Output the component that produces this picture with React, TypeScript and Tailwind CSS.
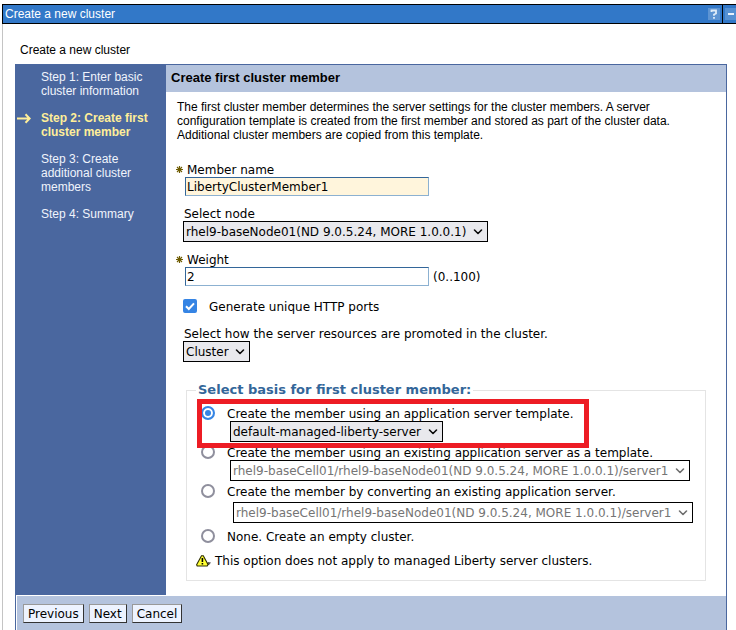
import type { ReactNode } from "react";

const sans = "font-['Liberation_Sans',Arial,sans-serif]";

function Chevron({ muted }: { muted?: boolean }) {
  return (
    <svg
      className="pointer-events-none absolute top-[7px] right-[5px] h-2 w-2.5"
      viewBox="0 0 10 8"
      fill="none"
      stroke={muted ? "#6e6e6e" : "#0a0a0a"}
      strokeWidth="1.6"
      strokeLinecap="round"
      strokeLinejoin="round"
      aria-hidden="true"
    >
      <path d="M1.5 2 5 5.5 8.5 2" />
    </svg>
  );
}

function Select({ id, value, label, disabled }: { id: string; value: string; label?: string; disabled?: boolean }) {
  return (
    <div className="relative w-fit">
      <select
        id={id}
        aria-label={label}
        disabled={disabled}
        defaultValue={value}
        className="block h-[21px] appearance-none border border-black bg-[#e9e9ed] pr-5 pl-0.5 leading-[18px] text-black disabled:bg-white disabled:text-[#757575] disabled:opacity-100"
      >
        <option>{value}</option>
      </select>
      <Chevron muted={disabled} />
    </div>
  );
}

function Required() {
  return (
    <svg className="h-[7px] w-[7px]" viewBox="0 0 7 7" stroke="#6e5c00" aria-hidden="true">
      <path d="M3.5 0v7M0 3.5h7" strokeWidth="1.2" />
      <path d="M1 1l5 5M6 1L1 6" strokeWidth="1.1" />
    </svg>
  );
}

function Label({ htmlFor, required, children }: { htmlFor: string; required?: boolean; children: ReactNode }) {
  return (
    <label htmlFor={htmlFor} className={required ? "-ml-[7px] flex h-4 items-center gap-1 leading-[18px]" : "block h-4 pl-px leading-[18px]"}>
      {required && <Required />}
      <span className="h-4">{children}</span>
    </label>
  );
}

function TextBox({ id, value, filled }: { id: string; value: string; filled?: boolean }) {
  return (
    <input
      id={id}
      type="text"
      defaultValue={value}
      className={`ml-0.5 block h-[19px] w-[244px] border border-t-[#336699] border-r-[#8cb1d1] border-b-[#8cb1d1] border-l-[#336699] px-px outline-none ${filled ? "bg-[#fff5dc]" : "bg-white"}`}
    />
  );
}

function Radio({ id, checked, children }: { id: string; checked?: boolean; children: ReactNode }) {
  return (
    <div className="flex h-4 items-center gap-3">
      <input
        id={id}
        type="radio"
        name="basis"
        defaultChecked={checked}
        className="h-3.5 w-3.5 shrink-0 appearance-none rounded-full border-2 border-[#8f8f9d] bg-white checked:border-[#3584e4] checked:bg-[#3584e4] checked:bg-clip-padding checked:shadow-[inset_0_0_0_2px_white]"
      />
      <label htmlFor={id} className="h-4 leading-[18px]">{children}</label>
    </div>
  );
}

function Step({ active, children }: { active?: boolean; children: ReactNode }) {
  return (
    <li className={`flex items-start ${active ? "font-bold text-[#ffee99]" : "text-[#f0f4fc]"}`} aria-current={active ? "step" : undefined}>
      <span className="w-[25px] shrink-0 pl-px">
        {active && (
          <svg className="h-3.5 w-3.5" viewBox="0 0 14 14" fill="none" stroke="currentColor" strokeWidth="2" aria-hidden="true">
            <path d="M0 7.5h12M8.5 3.2l4.2 4.3-4.2 4.3" />
          </svg>
        )}
      </span>
      <span>{children}</span>
    </li>
  );
}

function Button({ children }: { children: ReactNode }) {
  return (
    <button
      type="button"
      className="h-[19px] border border-t-[#999999] border-r-[#333333] border-b-[#333333] border-l-[#999999] bg-[#edf3ff] px-1 leading-4"
    >
      {children}
    </button>
  );
}

export default function App() {
  return (
    <div className="flex min-h-screen flex-col bg-white pt-1 pl-0.5 font-['DejaVu_Sans',Verdana,sans-serif] text-[12px] leading-4 text-black">
      <header className={`flex h-5 items-stretch border-y border-l border-black bg-[#3278c8] text-white ${sans}`}>
        <h1 className="flex-1 pl-0.5 leading-[18px]">Create a new cluster</h1>
        <div className="flex items-center gap-0.5">
          <button type="button" aria-label="Help" className="h-3 w-3 bg-[#5d94d3]">
            <svg className="h-3 w-3" viewBox="0 0 12 12" fill="none" stroke="#e0ecf8" strokeWidth="1.8" aria-hidden="true">
              <path d="M3.5 4V2.5h4.5v3L6 6.5v1.3M6 9v1.8" />
            </svg>
          </button>
          <div className="flex h-full items-center border-l border-black pl-0.5">
            <button type="button" aria-label="Minimize" className="flex h-3 w-[11px] items-center bg-[#5590d2] pl-[3px]">
              <span className="h-0.5 w-1.5 bg-[#e8f1fb]" />
            </button>
          </div>
        </div>
      </header>

      <main className="flex flex-1 flex-col border-l border-[#c4c4c4] pr-[9px] pl-3">
        <p className={`pt-[18px] pb-1.5 pl-[5px] ${sans}`}>Create a new cluster</p>

        <div className="flex flex-1 flex-col border border-b-0 border-[#4a679f]">
          <div className="flex">
            <nav className={`w-[150px] shrink-0 bg-[#4a679f] pt-[5px] leading-[14px] ${sans}`} aria-label="Steps">
              <ol className="flex flex-col gap-[13px]">
                <Step>Step 1: Enter basic cluster information</Step>
                <Step active>Step 2: Create first cluster member</Step>
                <Step>Step 3: Create additional cluster members</Step>
                <Step>Step 4: Summary</Step>
              </ol>
            </nav>

            <section className="min-w-0 flex-1">
              <h2 className={`h-[27px] bg-[#b4c3dd] pl-[5px] text-[13px] font-bold leading-[26px] ${sans}`}>Create first cluster member</h2>

              <form className="pt-2 pr-[21px] pb-3.5 pl-[17px]">
                <p className={`-ml-1.5 max-w-[500px] leading-[14px] ${sans}`}>
                  The first cluster member determines the server settings for the cluster members. A server configuration template
                  is created from the first member and stored as part of the cluster data. Additional cluster members are copied
                  from this template.
                </p>

                <div className="flex flex-col gap-[9px] pt-[19px]">
                  <div>
                    <Label htmlFor="name" required>Member name</Label>
                    <TextBox id="name" value="LibertyClusterMember1" filled />
                  </div>
                  <div>
                    <Label htmlFor="node">Select node</Label>
                    <Select id="node" value="rhel9-baseNode01(ND 9.0.5.24, MORE 1.0.0.1)" />
                  </div>
                  <div>
                    <Label htmlFor="weight" required>Weight</Label>
                    <div className="flex items-center gap-1">
                      <TextBox id="weight" value="2" />
                      <span>(0..100)</span>
                    </div>
                  </div>
                </div>

                <div className="flex items-center gap-3 pt-3">
                  <input
                    id="ports"
                    type="checkbox"
                    defaultChecked
                    className="peer h-3.5 w-3.5 appearance-none rounded-xs border-2 border-[#8f8f9d] bg-white checked:border-[#3584e4] checked:bg-[#3584e4]"
                  />
                  <svg
                    className="pointer-events-none invisible -ml-[26px] h-3.5 w-3.5 peer-checked:visible"
                    viewBox="0 0 14 14"
                    fill="none"
                    stroke="white"
                    strokeWidth="2"
                    aria-hidden="true"
                  >
                    <path d="M3 7.2 5.8 10 11 4.3" />
                  </svg>
                  <label htmlFor="ports" className="h-4 leading-[18px]">Generate unique HTTP ports</label>
                </div>

                <div className="pt-[11px]">
                  <Label htmlFor="promote">Select how the server resources are promoted in the cluster.</Label>
                  <Select id="promote" value="Cluster" />
                </div>

                <fieldset className="mt-[18px] ml-[3px] border border-[#e4e4e4] pr-3 pb-[11px] pl-[9px]">
                  <legend className="px-0.5 text-[13px] font-bold leading-5 text-[#336699]">Select basis for first cluster member:</legend>
                  <div className="pt-[5px] pl-[5px]">
                    <div className="relative">
                      <Radio id="template" checked>Create the member using an application server template.</Radio>
                      <div className="pl-[29px]">
                        <Select id="template-name" label="Server template" value="default-managed-liberty-server" />
                      </div>
                      <div className="pointer-events-none absolute -top-1.5 -bottom-1.5 -left-1 w-[392px] border-5 border-[#ed1c24]" />
                    </div>
                    <div className="pt-0.5">
                      <Radio id="existing">Create the member using an existing application server as a template.</Radio>
                      <div className="pl-[29px]">
                        <Select
                          id="existing-name"
                          label="Existing server"
                          disabled
                          value="rhel9-baseCell01/rhel9-baseNode01(ND 9.0.5.24, MORE 1.0.0.1)/server1"
                        />
                      </div>
                    </div>
                    <div className="pt-0.5">
                      <Radio id="convert">Create the member by converting an existing application server.</Radio>
                      <div className="pt-[3px] pl-8">
                        <Select
                          id="convert-name"
                          label="Server to convert"
                          disabled
                          value="rhel9-baseCell01/rhel9-baseNode01(ND 9.0.5.24, MORE 1.0.0.1)/server1"
                        />
                      </div>
                    </div>
                    <div className="pt-[5px]">
                      <Radio id="none">None. Create an empty cluster.</Radio>
                    </div>
                  </div>
                  <p className="flex items-center gap-1 pt-[9px]">
                    <svg className="h-3 w-[15px]" viewBox="0 0 15 12" aria-hidden="true">
                      <path d="M9 10.5 12 7l3 .5-2 2.5z" fill="#555" />
                      <path d="M5.5.7h1.8L12 9.5l-.8 1.5H1.2L.6 9.7z" fill="#ffff33" stroke="#2c2c00" strokeWidth="1.1" />
                      <path d="M6.4 3v4M6.4 8v1.5" stroke="#000" strokeWidth="1.6" />
                    </svg>
                    This option does not apply to managed Liberty server clusters.
                  </p>
                </fieldset>
              </form>
            </section>
          </div>

          <div className="flex flex-1 items-start gap-[5px] border-t border-l border-white bg-[#b4c3dd] pt-2 pb-1.5 pl-1.5">
            <Button>Previous</Button>
            <Button>Next</Button>
            <Button>Cancel</Button>
          </div>
        </div>
      </main>
    </div>
  );
}
